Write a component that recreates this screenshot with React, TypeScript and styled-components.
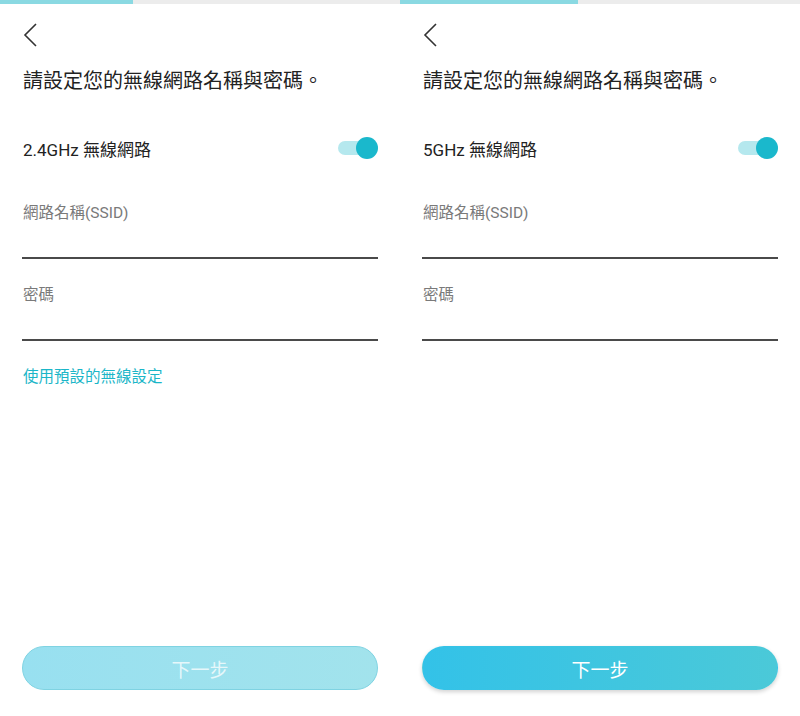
import React from 'react';
import styled, { createGlobalStyle } from 'styled-components';

const GlobalStyle = createGlobalStyle`
  html, body {
    margin: 0;
    padding: 0;
    background: #ffffff;
  }
  body {
    font-family: Roboto, "Noto Sans CJK TC", "Noto Sans", sans-serif;
  }
`;

const Screen = styled.div`
  display: flex;
  width: 800px;
  height: 716px;
  overflow: hidden;
`;

const Panel = styled.div`
  width: 400px;
  height: 716px;
  display: flex;
  flex-direction: column;
`;

const Progress = styled.div`
  height: 4px;
  background: #ececec;
  display: flex;
`;

const ProgressFill = styled.div`
  height: 100%;
  background: #8ad9e2;
`;

const Body = styled.div`
  flex: 1;
  display: flex;
  flex-direction: column;
  padding: 0 22px 26px 22px;
`;

const BackButton = styled.button`
  margin-top: 18px;
  width: 20px;
  height: 26px;
  padding: 0;
  border: none;
  background: none;
  display: flex;
  align-items: center;
  cursor: pointer;
`;

const Title = styled.h1`
  margin: 20px 0 0 1px;
  font-family: "Noto Sans CJK TC", sans-serif;
  font-size: 20px;
  line-height: 24px;
  font-weight: 400;
  color: #222;
`;

const ToggleRow = styled.div`
  margin-top: 41px;
  height: 30px;
  display: flex;
  align-items: center;
  justify-content: space-between;
`;

const ToggleLabel = styled.span`
  font-size: 17px;
  color: #222;
  padding-left: 1px;
`;

const Switch = styled.div`
  position: relative;
  width: 40px;
  height: 22px;
`;

const Track = styled.div`
  position: absolute;
  left: 0;
  top: 4px;
  width: 34px;
  height: 14px;
  border-radius: 7px;
  background: #b5e8ee;
`;

const Knob = styled.div`
  position: absolute;
  right: 0;
  top: 0;
  width: 22px;
  height: 22px;
  border-radius: 50%;
  background: #1ab8cc;
`;

const Field = styled.div<{ $gap: number }>`
  margin-top: ${p => p.$gap}px;
  display: flex;
  flex-direction: column;
  border-bottom: 2px solid #4a4a4a;
  padding-bottom: 34px;
`;

const FieldLabel = styled.span`
  font-size: 15.5px;
  line-height: 20px;
  color: #7a7a7a;
  padding-left: 1px;
`;

const Link = styled.a`
  margin-top: 26px;
  font-size: 15.5px;
  line-height: 20px;
  color: #1bb6c8;
  padding-left: 1px;
  cursor: pointer;
`;

const NextButton = styled.button<{ $active: boolean }>`
  margin-top: auto;
  height: 44px;
  border-radius: 22px;
  font-family: "Noto Sans CJK TC", sans-serif;
  font-size: 19px;
  cursor: pointer;
  border: 1px solid ${p => (p.$active ? 'transparent' : '#7fd3e2')};
  color: ${p => (p.$active ? '#ffffff' : 'rgba(255,255,255,0.75)')};
  background: ${p =>
    p.$active
      ? 'linear-gradient(90deg, #33c2e8, #4bc9d8)'
      : 'linear-gradient(90deg, #98e0f0, #a2e3ec)'};
  box-shadow: ${p => (p.$active ? '0 2px 4px rgba(0,0,0,0.18)' : 'none')};
`;

const Chevron = () => (
  <svg width="16" height="26" viewBox="0 0 16 26">
    <polyline points="14,2 3,13 14,24" fill="none" stroke="#333" strokeWidth="1.6" />
  </svg>
);

const SetupPanel: React.FC<{ progress: number; band: string; showLink: boolean; active: boolean }> = ({
  progress,
  band,
  showLink,
  active,
}) => (
  <Panel>
    <Progress>
      <ProgressFill style={{ width: `${progress}px` }} />
    </Progress>
    <Body>
      <BackButton>
        <Chevron />
      </BackButton>
      <Title>請設定您的無線網路名稱與密碼。</Title>
      <ToggleRow>
        <ToggleLabel>{band} 無線網路</ToggleLabel>
        <Switch>
          <Track />
          <Knob />
        </Switch>
      </ToggleRow>
      <Field $gap={40}>
        <FieldLabel>網路名稱(SSID)</FieldLabel>
      </Field>
      <Field $gap={26}>
        <FieldLabel>密碼</FieldLabel>
      </Field>
      {showLink && <Link>使用預設的無線設定</Link>}
      <NextButton $active={active}>下一步</NextButton>
    </Body>
  </Panel>
);

export default function App() {
  return (
    <>
      <GlobalStyle />
      <Screen>
        <SetupPanel progress={133} band="2.4GHz" showLink active={false} />
        <SetupPanel progress={178} band="5GHz" showLink={false} active />
      </Screen>
    </>
  );
}
